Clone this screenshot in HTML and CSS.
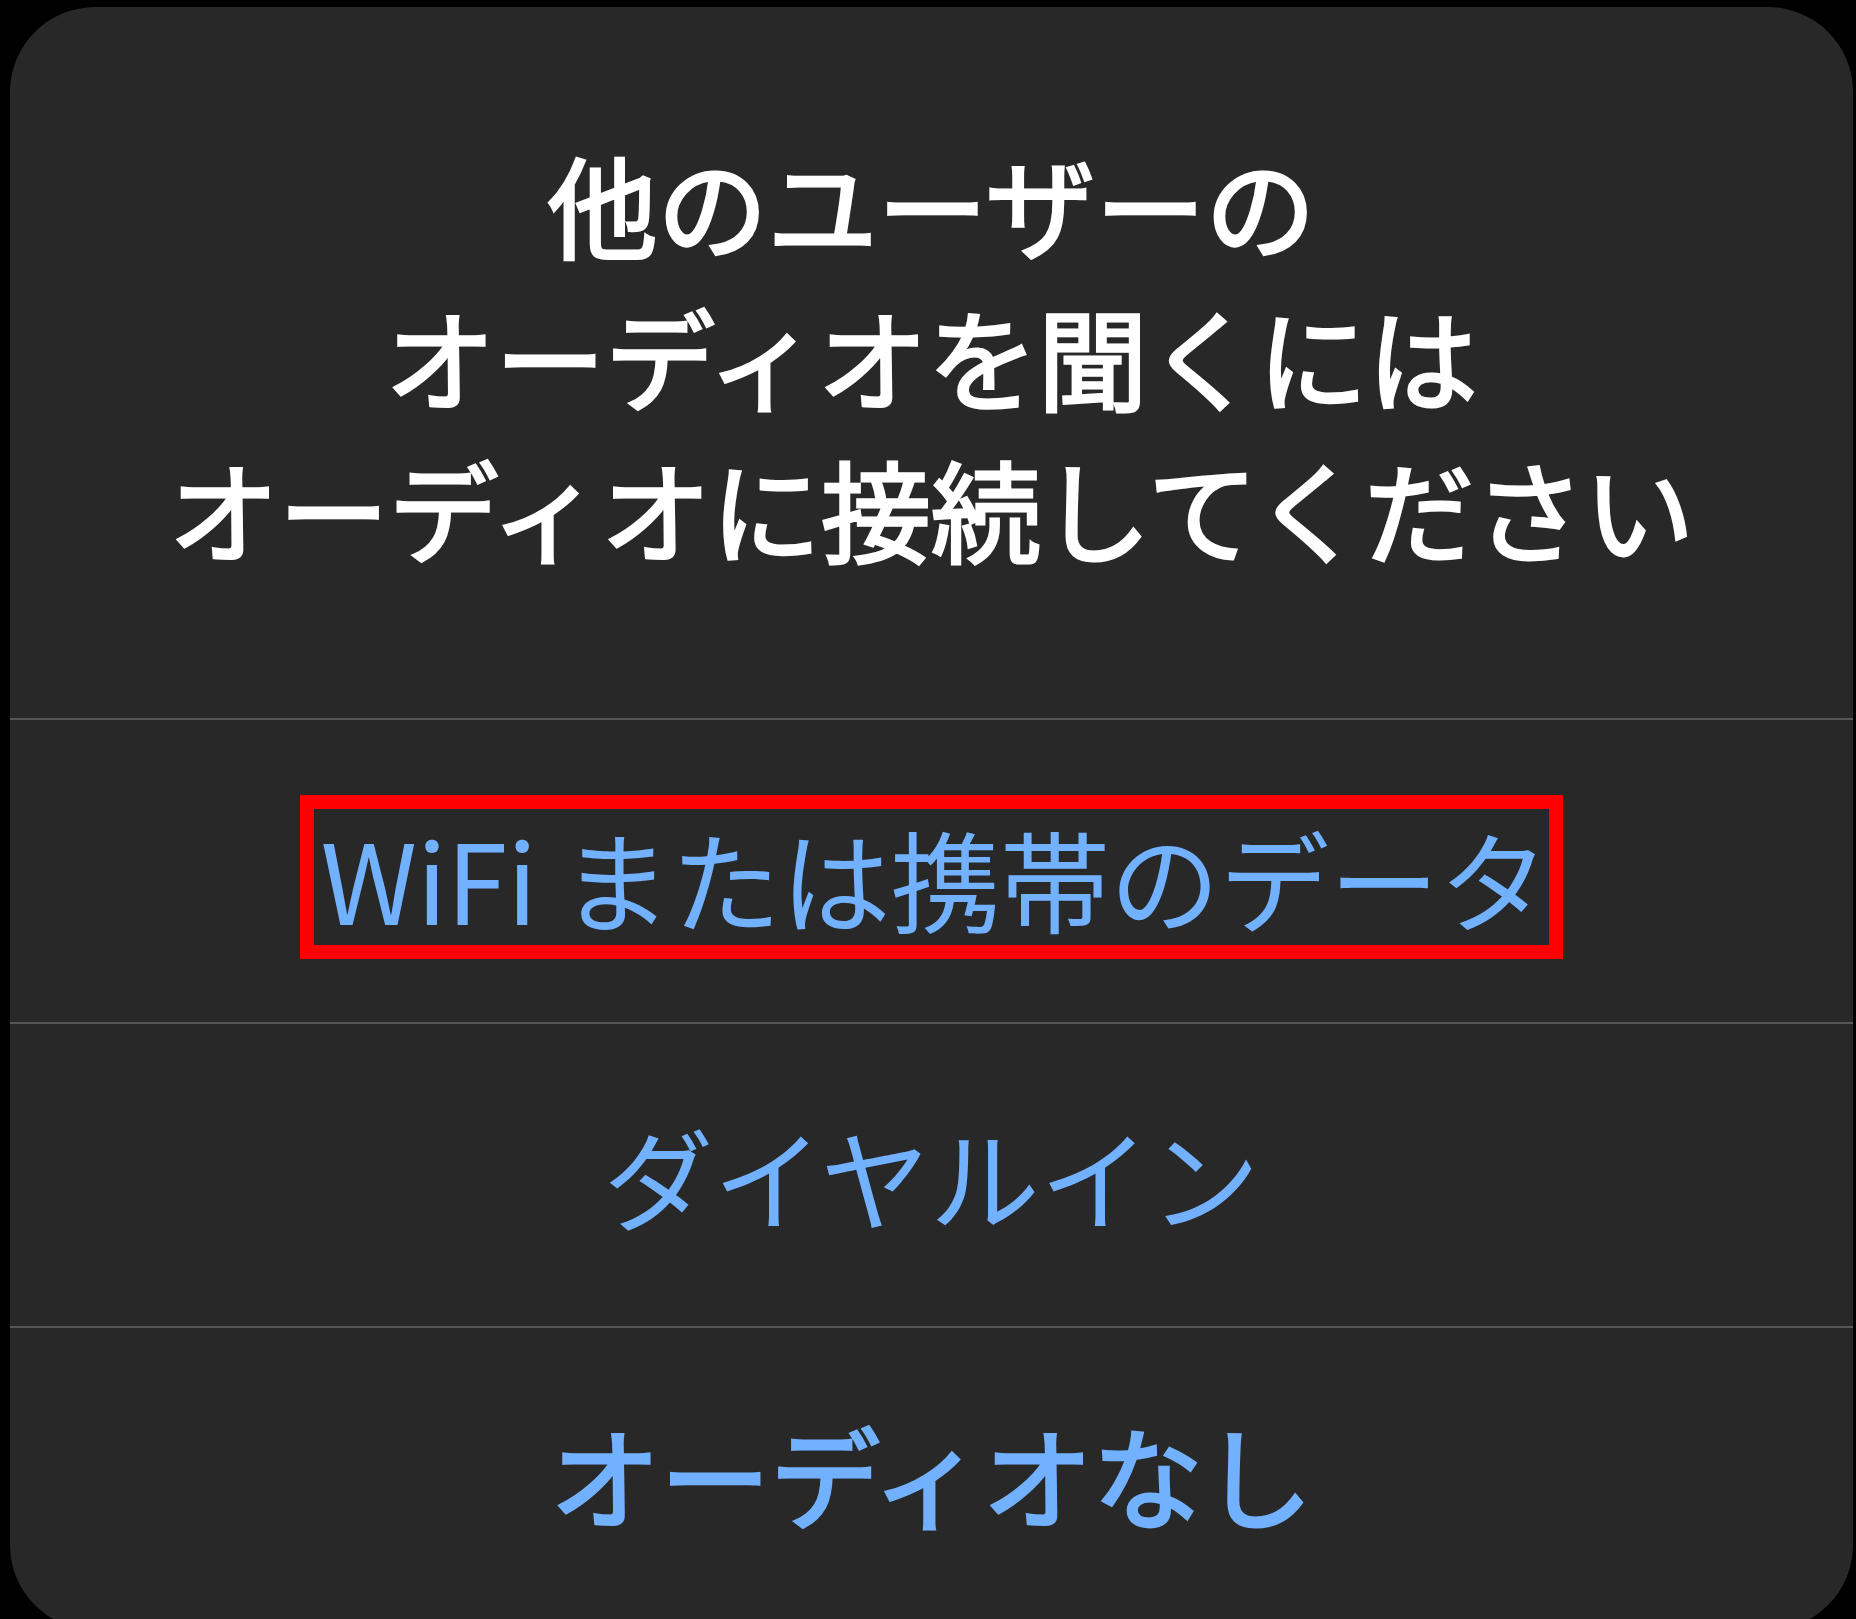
FILE: index.html
```html
<!DOCTYPE html>
<html lang="ja">
<head>
<meta charset="utf-8">
<title>オーディオに接続</title>
<link rel="stylesheet" href="styles.css">
</head>
<body>
<div class="sheet">
  <div class="title">他のユーザーの<br>オーディオを聞くには<br>オーディオに接続してください</div>
  <div class="action"><span class="label highlight">WiFi または携帯のデータ</span></div>
  <div class="action"><span class="label">ダイヤルイン</span></div>
  <div class="action action-strong"><span class="label">オーディオなし</span></div>
</div>
</body>
</html>
```

FILE: styles.css
```css
html, body {
  margin: 0;
  padding: 0;
  background: #000;
  height: 100%;
  overflow: hidden;
}

.sheet {
  margin: 7px 0 0 10px;
  width: 1843px;
  height: 1623px;
  background: #282828;
  border-radius: 85px;
  font-family: "Noto Sans CJK JP", "Noto Sans", sans-serif;
  display: flex;
  flex-direction: column;
  overflow: hidden;
}

.title {
  box-sizing: border-box;
  height: 711px;
  padding: 120px 40px 0;
  text-align: center;
  color: #fff;
  font-size: 110px;
  line-height: 152px;
  font-weight: 400;
  -webkit-text-stroke: 3px #fff;
}

.action {
  box-sizing: border-box;
  height: 304px;
  border-top: 2px solid #575757;
  display: flex;
  align-items: center;
  justify-content: center;
  color: #72b1ff;
  font-size: 110px;
  font-weight: 400;
}

.action-strong {
  padding-bottom: 12px;
  -webkit-text-stroke: 3px #72b1ff;
}

.label {
  line-height: 136px;
  white-space: nowrap;
}

.highlight {
  display: inline-block;
  margin-top: 12px;
  border: 14px solid #ff0000;
  padding: 0 0 0 6px;
  letter-spacing: -0.3px;
}
```
